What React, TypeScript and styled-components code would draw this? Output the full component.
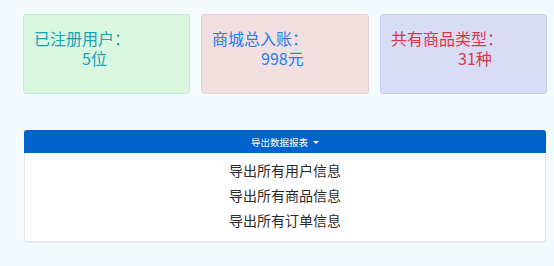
import React, { useState } from 'react';
import styled, { createGlobalStyle } from 'styled-components';

const GlobalStyle = createGlobalStyle`
  html, body {
    margin: 0;
    padding: 0;
    background-color: #f4fbfe;
    font-family: "Noto Sans CJK SC", "Noto Sans", sans-serif;
  }
`;

const Page = styled.div`
  width: 554px;
  height: 266px;
  box-sizing: border-box;
  padding: 14px 8px 0 23px;
  overflow: hidden;
`;

const StatsRow = styled.div`
  display: grid;
  grid-template-columns: 167px 168px 167px;
  gap: 11px;
`;

const StatCard = styled.div<{ $bg: string; $border: string; $color: string }>`
  box-sizing: border-box;
  height: 80px;
  padding: 13px 10px 0;
  background-color: ${({ $bg }) => $bg};
  border: 1px solid ${({ $border }) => $border};
  border-radius: 3px;
  color: ${({ $color }) => $color};
  font-size: 16px;
  line-height: 21px;
`;

const StatTitle = styled.div``;

const StatValue = styled.div<{ $indent: number }>`
  padding-left: ${({ $indent }) => $indent}px;
  margin-top: -1px;
`;

const ExportSection = styled.div`
  margin: 36px 0 0 1px;
`;

const ExportButton = styled.button`
  display: flex;
  align-items: center;
  justify-content: center;
  gap: 5px;
  width: 100%;
  height: 23px;
  padding: 0;
  border: none;
  border-radius: 3px 3px 0 0;
  background-color: #0062cc;
  color: #ffffff;
  font-family: "Noto Sans CJK SC", sans-serif;
  font-size: 9.5px;
  cursor: pointer;
`;

const Caret = styled.span`
  width: 0;
  height: 0;
  border-left: 3px solid transparent;
  border-right: 3px solid transparent;
  border-top: 3px solid #ffffff;
  margin-top: 1px;
`;

const Menu = styled.div`
  box-sizing: border-box;
  height: 89px;
  padding: 5px 0 8px;
  background-color: #ffffff;
  border: 1px solid #e2e6ea;
  border-top: none;
  border-radius: 0 0 3px 3px;
  box-shadow: 0 1px 2px rgba(0, 0, 0, 0.05);
`;

const MenuItem = styled.div`
  height: 25px;
  line-height: 25px;
  text-align: center;
  font-size: 14px;
  color: #2b2b2b;
  cursor: pointer;

  &:hover {
    background-color: #f1f3f5;
  }
`;

const stats = [
  { title: '已注册用户：', value: '5位', bg: '#d9f6df', border: '#c6ead0', color: '#17a2b8', indent: 48 },
  { title: '商城总入账：', value: '998元', bg: '#f2dfe0', border: '#ead0d3', color: '#1a7ef2', indent: 49 },
  { title: '共有商品类型：', value: '31种', bg: '#d9dcf6', border: '#c9ccee', color: '#dc3545', indent: 67 },
];

const exportItems = ['导出所有用户信息', '导出所有商品信息', '导出所有订单信息'];

const App: React.FC = () => {
  const [open, setOpen] = useState(true);

  return (
    <>
      <GlobalStyle />
      <Page>
        <StatsRow>
          {stats.map((s) => (
            <StatCard key={s.title} $bg={s.bg} $border={s.border} $color={s.color}>
              <StatTitle>{s.title}</StatTitle>
              <StatValue $indent={s.indent}>{s.value}</StatValue>
            </StatCard>
          ))}
        </StatsRow>
        <ExportSection>
          <ExportButton onClick={() => setOpen(!open)}>
            导出数据报表 <Caret />
          </ExportButton>
          {open && (
            <Menu>
              {exportItems.map((item) => (
                <MenuItem key={item}>{item}</MenuItem>
              ))}
            </Menu>
          )}
        </ExportSection>
      </Page>
    </>
  );
};

export default App;
